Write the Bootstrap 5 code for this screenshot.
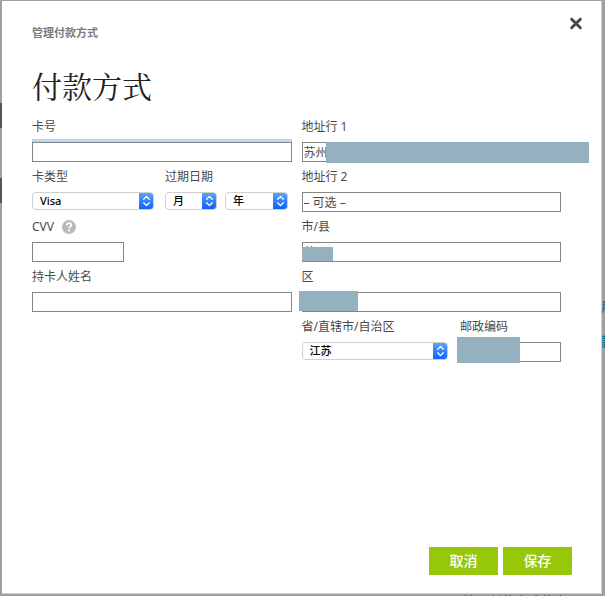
<!DOCTYPE html>
<html lang="zh-CN">
<head>
<meta charset="utf-8">
<meta name="viewport" content="width=device-width, initial-scale=1">
<title>管理付款方式</title>
<link href="https://cdn.jsdelivr.net/npm/bootstrap@5.3.0/dist/css/bootstrap.min.css" rel="stylesheet">
<style>
  body { background: #a0a0a0; color: #4a4a4a; font: 12px/18px "Noto Sans", "Noto Sans CJK SC", sans-serif; }
  .backdrop-page { z-index: 0; }
  .backdrop-tab { left: 0; width: 12px; height: 25px; background: #555; }
  .tab-a { top: 103px; }
  .tab-b { top: 178px; }
  .backdrop-link { left: 601px; color: #0f6c96; font-size: 13px; font-weight: 500; }
  .link-a { top: 297px; }
  .link-b { top: 332px; }
  .backdrop-note { left: 463px; top: calc(100% - 4px); color: #333; font-size: 13px; white-space: nowrap; }
  .dialog-wrap { z-index: 1; padding: 1px 3px 2px 2px; }
  .dialog-panel { background: #fff; padding: 0 29px 18px 30px; border-right: 1px solid #d0d0d0; border-bottom: 1px solid #d0d0d0; }
  .dialog-top { padding-top: 14px; margin-right: -12px; }
  .dialog-name { font-size: 11px; line-height: 18px; font-weight: 700; color: #7b7b7b; margin-top: 9px; }
  .close-x { width: 16px; height: 16px; line-height: 0; }
  .heading { font: 400 30px/40px "Songti SC", "Noto Serif CJK SC", "Noto Sans CJK SC", serif; color: #222; margin: 23px 0 13px; }
  .form-cols { gap: 10px; padding-right: 11px; }
  .form-side { flex: 1 1 0; min-width: 0; }
  .field { height: 50px; min-width: 0; }
  .field label { display: block; line-height: 18px; margin-bottom: 6px; }
  .box { display: block; width: 100%; height: 20px; padding: 0 1px; border: 1px solid #868686; border-radius: 0; background: #fff; color: #4a4a4a; font-size: 12px; line-height: 18px; outline: 0; }
  .box::placeholder { color: #4a4a4a; opacity: 1; }
  .box-active { box-shadow: 0 -3px 0 #b3d7ff; }
  .box-short { width: 92px; }
  .pick { appearance: none; display: block; width: 100%; height: 18px; padding: 0 18px 0 7px; border: 1px solid #cfcfcf; border-radius: 4px; color: #000; font-size: 11px; font-weight: 500; line-height: 16px;
    background: #fff url("data:image/svg+xml,%3Csvg xmlns='http://www.w3.org/2000/svg' width='15' height='18'%3E%3Cdefs%3E%3ClinearGradient id='g' x2='0' y2='1'%3E%3Cstop stop-color='%235fa8fb'/%3E%3Cstop offset='1' stop-color='%23085cfa'/%3E%3C/linearGradient%3E%3C/defs%3E%3Cpath d='M0 0h11a4 4 0 0 1 4 4v10a4 4 0 0 1-4 4H0z' fill='url(%23g)'/%3E%3Cpath d='M4.7 7.3 7.5 4.4l2.8 2.9M4.7 10.7l2.8 2.9 2.8-2.9' fill='none' stroke='%23fff' stroke-width='1.3' stroke-linecap='round' stroke-linejoin='round'/%3E%3C/svg%3E") no-repeat right top;
    background-origin: border-box; background-clip: border-box; }
  .w-type { width: 122px; margin-right: 11px; }
  .w-month { width: 52px; }
  .w-year { width: 63px; }
  .w-post { width: 101px; }
  .prov { margin-right: 12px; }
  .help { width: 14px; height: 14px; line-height: 0; margin-top: 2px; }
  .veil { background: #95b1bf; }
  .veil-line { left: 24px; right: -28px; top: 0; height: 21px; }
  .veil-city { left: 0; top: 5px; width: 31px; height: 14px; }
  .veil-area { left: -3px; top: -1px; width: 59px; height: 20px; }
  .veil-post { left: -3px; top: -5px; width: 63px; height: 26px; }
  .actions { gap: 5px; }
  .act { width: 69px; height: 28px; padding: 0; border: 0; border-radius: 0; background: #96c809; color: #fff; font-size: 14px; line-height: 28px; font-weight: 500; }
  .act:hover { background: #86b400; color: #fff; }
</style>
</head>
<body class="position-relative overflow-hidden">
<div class="backdrop-page position-absolute top-0 start-0 w-100 h-100" aria-hidden="true">
  <div class="backdrop-tab tab-a position-absolute"></div>
  <div class="backdrop-tab tab-b position-absolute"></div>
  <span class="backdrop-link link-a position-absolute">用</span>
  <span class="backdrop-link link-b position-absolute">款</span>
  <span class="backdrop-note position-absolute">管理付款方式信息</span>
</div>

<main class="dialog-wrap position-relative d-flex min-vh-100">
  <section class="dialog-panel d-flex flex-column flex-grow-1" role="dialog" aria-labelledby="dlg">
    <header class="dialog-top d-flex justify-content-between align-items-start">
      <div id="dlg" class="dialog-name">管理付款方式</div>
      <button type="button" class="close-x btn p-0 border-0" aria-label="关闭">
        <svg width="16" height="16" viewBox="0 0 16 16"><path d="M3.7 4.2l8.6 8.6M12.3 4.2l-8.6 8.6" stroke="#4a4a4a" stroke-width="3" stroke-linecap="round"/></svg>
      </button>
    </header>
    <h1 class="heading">付款方式</h1>

    <form id="pay" class="form-cols d-flex">
      <div class="form-side">
        <div class="field">
          <label for="num">卡号</label>
          <input id="num" class="box box-active" type="text">
        </div>
        <div class="d-flex">
          <div class="field w-type">
            <label for="type">卡类型</label>
            <select id="type" class="pick"><option>Visa</option></select>
          </div>
          <div class="field">
            <label for="month">过期日期</label>
            <div class="d-flex gap-2">
              <select id="month" class="pick w-month"><option>月</option></select>
              <select class="pick w-year" aria-label="年"><option>年</option></select>
            </div>
          </div>
        </div>
        <div class="field">
          <div class="d-flex align-items-start">
            <label for="cvv" class="me-2">CVV</label>
            <button type="button" class="help btn p-0 border-0" aria-label="帮助">
              <svg width="14" height="14" viewBox="0 0 14 14"><circle cx="7" cy="7" r="7" fill="#b9b9b9"/><path d="M4.8 5.4C4.9 3.9 5.8 3.2 7.1 3.2c1.3 0 2.2.8 2.2 1.9 0 1.6-2.2 1.6-2.2 3.2" fill="none" stroke="#fff" stroke-width="1.7"/><circle cx="7.1" cy="10.4" r="1.1" fill="#fff"/></svg>
            </button>
          </div>
          <input id="cvv" class="box box-short" type="text">
        </div>
        <div class="field">
          <label for="holder">持卡人姓名</label>
          <input id="holder" class="box" type="text">
        </div>
      </div>

      <div class="form-side">
        <div class="field">
          <label for="addr1">地址行 1</label>
          <div class="position-relative">
            <input id="addr1" class="box" type="text" value="苏州">
            <div class="veil veil-line position-absolute"></div>
          </div>
        </div>
        <div class="field">
          <label for="addr2">地址行 2</label>
          <input id="addr2" class="box" type="text" placeholder="– 可选 –">
        </div>
        <div class="field">
          <label for="city">市/县</label>
          <div class="position-relative">
            <input id="city" class="box" type="text" value="苏州">
            <div class="veil veil-city position-absolute"></div>
          </div>
        </div>
        <div class="field">
          <label for="area">区</label>
          <div class="position-relative">
            <input id="area" class="box" type="text">
            <div class="veil veil-area position-absolute"></div>
          </div>
        </div>
        <div class="d-flex">
          <div class="field flex-grow-1 prov">
            <label for="prov">省/直辖市/自治区</label>
            <select id="prov" class="pick"><option>江苏</option></select>
          </div>
          <div class="field w-post">
            <label for="post">邮政编码</label>
            <div class="position-relative">
              <input id="post" class="box" type="text">
              <div class="veil veil-post position-absolute"></div>
            </div>
          </div>
        </div>
      </div>
    </form>

    <footer class="actions d-flex justify-content-end mt-auto">
      <button type="button" class="act btn">取消</button>
      <button type="submit" form="pay" class="act btn">保存</button>
    </footer>
  </section>
</main>
<script src="https://cdn.jsdelivr.net/npm/bootstrap@5.3.0/dist/js/bootstrap.bundle.min.js"></script>
</body>
</html>
